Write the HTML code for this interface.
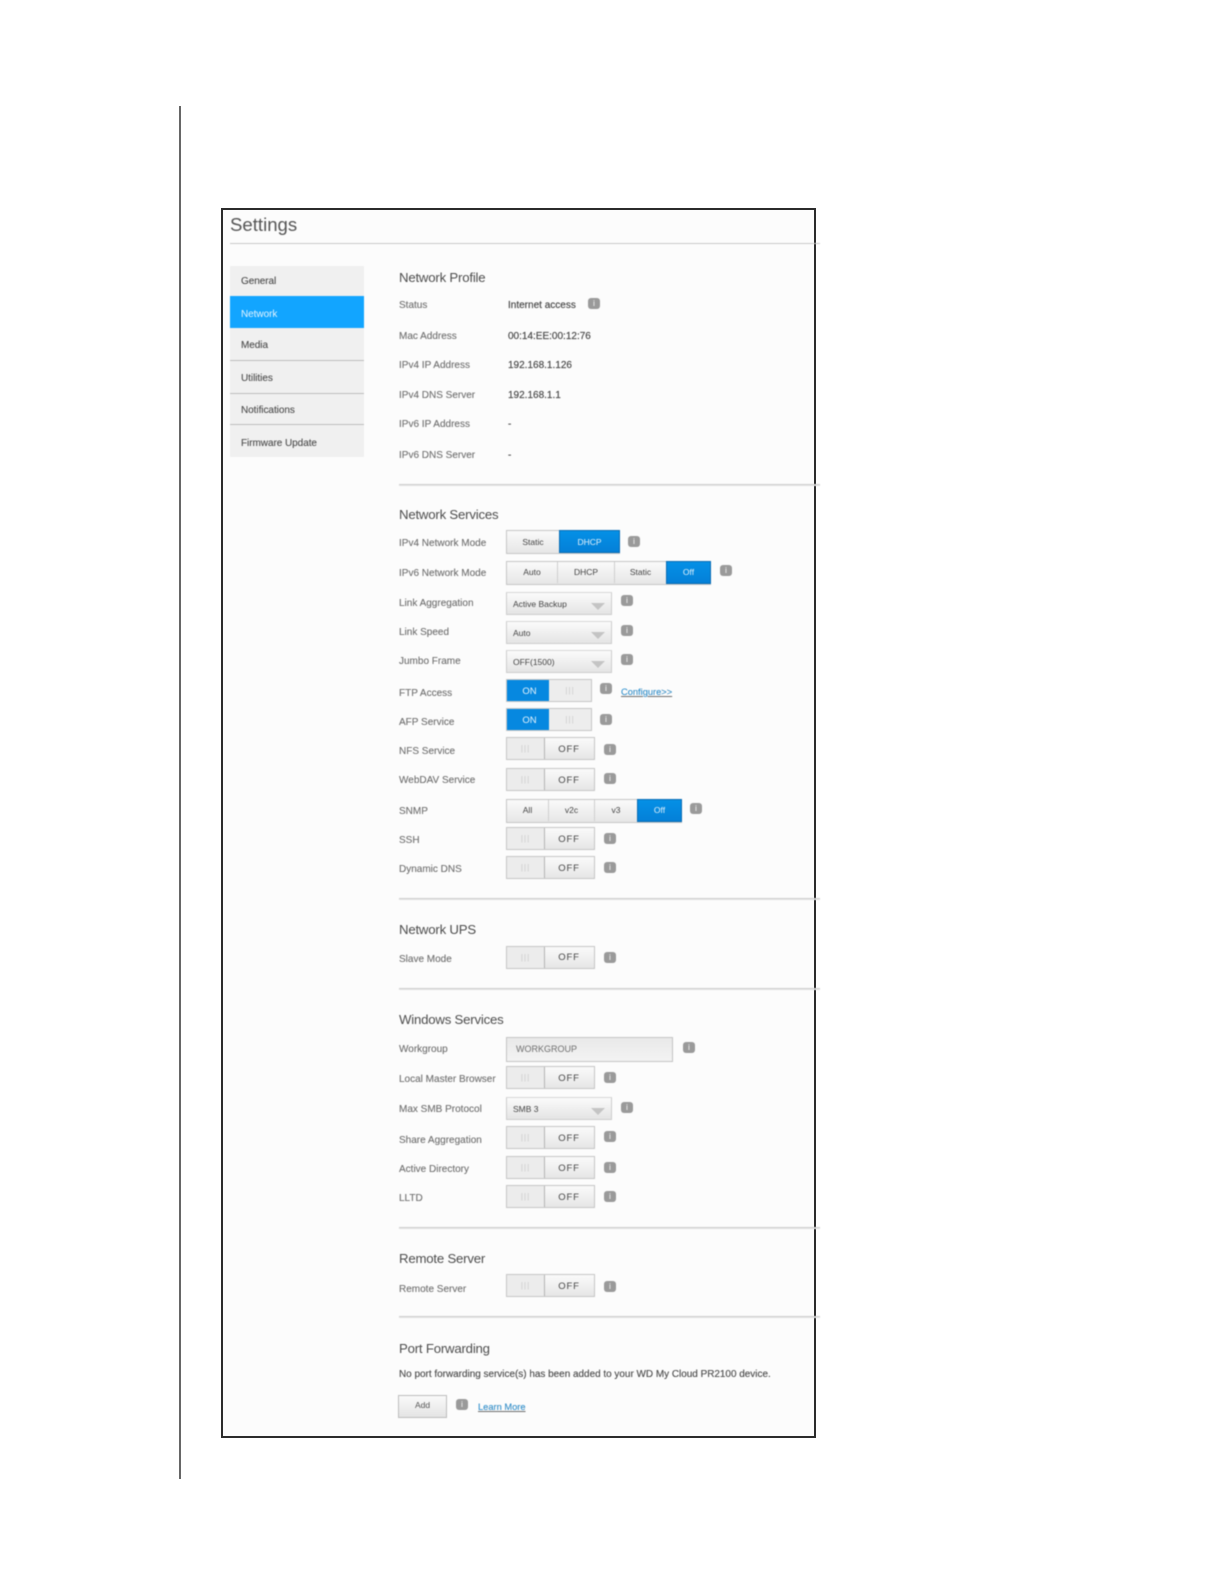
<!DOCTYPE html>
<html><head><meta charset="utf-8"><title>Settings</title>
<style>
html,body{margin:0;padding:0;background:#fff}
body{width:1224px;height:1584px;position:relative;overflow:hidden;font-family:"Liberation Sans",sans-serif}
.a{position:absolute}
#v{position:absolute;left:179px;top:106px;width:2px;height:1373px;background:#666}
#f{position:absolute;left:221px;top:208px;width:591px;height:1226px;border:2px solid #2b2b2b;background:#fcfcfc}
#c{position:absolute;left:0;top:0;width:1224px;height:1584px;filter:blur(.5px)}
.t{position:absolute;height:12px;line-height:12px;font-size:10px;white-space:nowrap;color:#6e6e6e;-webkit-text-stroke:.1px #6e6e6e}
.l{left:399px}
.val{left:508px;color:#444;-webkit-text-stroke:.15px #444}
.h{position:absolute;left:399px;height:18px;line-height:18px;font-size:13.2px;letter-spacing:-.2px;color:#4d4d4d;white-space:nowrap}
.hr{position:absolute;left:399px;width:421px;height:1px;background:#cfcfcf;border-bottom:1px solid #e2e2e2}
.nav{position:absolute;left:241px;height:12px;line-height:12px;font-size:10px;letter-spacing:-.05px;color:#4c4c4c;white-space:nowrap;-webkit-text-stroke:.1px #4c4c4c}
.sep{position:absolute;left:230px;width:134px;height:1px;background:#bdbdbd}
.i{position:absolute;width:12px;height:11px;margin:-5px 0 0 -6px;border-radius:3px;background:#9a9a9a;color:#ddd;font-size:8px;line-height:11px;text-align:center;font-weight:bold}
.g{position:absolute;height:23px;box-sizing:border-box;border:1px solid #c6c6c6;background:linear-gradient(#fafafa,#e6e6e6);display:flex;color:#444;font-size:8.5px;line-height:21px;text-align:center}
.g span{display:block;box-sizing:border-box;border-right:1px solid #cfcfcf;height:21px}
.g span:last-child{border-right:0}
.g span.on{background:linear-gradient(#0490e6,#0480d8);color:#e4f2fb;outline:1px solid #0a6db5}
.o{left:506px;width:89px}
.o span:first-child{width:38px;background:#ececec;color:#ccc;border-right:1px solid #b5b5b5;letter-spacing:1px}
.o span:last-child{width:49px;color:#444;font-size:9.5px;letter-spacing:.8px;line-height:23px;padding-right:1px}
.n{left:506px;width:86px;border-color:#c6c6c6}
.n span:first-child{width:42px;background:#0688e0;color:#e8f4fc;font-size:9.5px;border:0;line-height:23px;padding-left:3px}
.n span:last-child{width:42px;background:#ededed;color:#ccc;letter-spacing:1px}
.s{position:absolute;left:506px;width:106px;height:23px;box-sizing:border-box;border:1px solid #cdcdcd;border-top-color:#d8d8d8;background:linear-gradient(#fbfbfb,#e4e4e4);font-size:8.5px;color:#444;line-height:23px;padding-left:6px}
.s:after{content:"";position:absolute;right:6px;top:10px;border-left:7px solid transparent;border-right:7px solid transparent;border-top:7px solid #c4c4c4}
a{color:#1a93e0;text-decoration:underline;font-size:9.3px}
</style></head><body>
<div id="v"></div>
<div id="f"></div>
<div id="c">
<div class="a" style="left:230px;top:214px;height:22px;line-height:22px;font-size:18.6px;color:#555">Settings</div>
<div class="a" style="left:230px;top:243px;width:590px;height:1px;background:#c8c8c8"></div>

<div class="a" style="left:230px;top:266px;width:134px;height:191px;background:#f0f0f0"></div>
<div class="a" style="left:230px;top:296px;width:134px;height:32px;background:#12a5ff"></div>
<div class="sep" style="top:360px"></div><div class="sep" style="top:393px"></div><div class="sep" style="top:424px"></div>
<div class="nav" style="top:276px">General</div>
<div class="nav" style="top:309px;color:#e6f5ff;-webkit-text-stroke:0">Network</div>
<div class="nav" style="top:340px">Media</div>
<div class="nav" style="top:373px">Utilities</div>
<div class="nav" style="top:405px">Notifications</div>
<div class="nav" style="top:438px">Firmware Update</div>

<div class="h" style="top:269px">Network Profile</div>
<div class="t l" style="top:300px">Status</div><div class="t val" style="top:300px">Internet access</div><div class="i" style="left:594px;top:303px">i</div>
<div class="t l" style="top:331px">Mac Address</div><div class="t val" style="top:331px">00:14:EE:00:12:76</div>
<div class="t l" style="top:360px">IPv4 IP Address</div><div class="t val" style="top:360px">192.168.1.126</div>
<div class="t l" style="top:390px">IPv4 DNS Server</div><div class="t val" style="top:390px">192.168.1.1</div>
<div class="t l" style="top:419px">IPv6 IP Address</div><div class="t val" style="top:419px">-</div>
<div class="t l" style="top:450px">IPv6 DNS Server</div><div class="t val" style="top:450px">-</div>
<div class="hr" style="top:484px"></div>

<div class="h" style="top:506px">Network Services</div>
<div class="t l" style="top:538px">IPv4 Network Mode</div>
<div class="g" style="left:506px;top:530px;width:114px;height:24px"><span style="width:53px;line-height:22px">Static</span><span class="on" style="width:59px;line-height:22px">DHCP</span></div>
<div class="i" style="left:634px;top:541px">i</div>
<div class="t l" style="top:568px">IPv6 Network Mode</div>
<div class="g" style="left:506px;top:561px;width:205px;height:24px"><span style="width:51px">Auto</span><span style="width:57px">DHCP</span><span style="width:52px">Static</span><span class="on" style="width:43px">Off</span></div>
<div class="i" style="left:726px;top:570px">i</div>
<div class="t l" style="top:598px">Link Aggregation</div><div class="s" style="top:592px">Active Backup</div><div class="i" style="left:627px;top:600px">i</div>
<div class="t l" style="top:627px">Link Speed</div><div class="s" style="top:621px">Auto</div><div class="i" style="left:627px;top:630px">i</div>
<div class="t l" style="top:656px">Jumbo Frame</div><div class="s" style="top:650px">OFF(1500)</div><div class="i" style="left:627px;top:659px">i</div>
<div class="t l" style="top:688px">FTP Access</div><div class="g n" style="top:679px"><span>ON</span><span>|||</span></div><div class="i" style="left:606px;top:688px">i</div>
<div class="t" style="left:621px;top:686px"><a href="#">Configure&gt;&gt;</a></div>
<div class="t l" style="top:717px">AFP Service</div><div class="g n" style="top:708px"><span>ON</span><span>|||</span></div><div class="i" style="left:606px;top:719px">i</div>
<div class="t l" style="top:746px">NFS Service</div><div class="g o" style="top:737px"><span>|||</span><span>OFF</span></div><div class="i" style="left:610px;top:749px">i</div>
<div class="t l" style="top:775px">WebDAV Service</div><div class="g o" style="top:768px"><span>|||</span><span>OFF</span></div><div class="i" style="left:610px;top:778px">i</div>
<div class="t l" style="top:806px">SNMP</div>
<div class="g" style="left:506px;top:799px;width:176px;height:24px"><span style="width:42px">All</span><span style="width:46px">v2c</span><span style="width:43px">v3</span><span class="on" style="width:43px">Off</span></div>
<div class="i" style="left:696px;top:808px">i</div>
<div class="t l" style="top:835px">SSH</div><div class="g o" style="top:827px"><span>|||</span><span>OFF</span></div><div class="i" style="left:610px;top:838px">i</div>
<div class="t l" style="top:864px">Dynamic DNS</div><div class="g o" style="top:856px"><span>|||</span><span>OFF</span></div><div class="i" style="left:610px;top:867px">i</div>
<div class="hr" style="top:898px"></div>

<div class="h" style="top:921px">Network UPS</div>
<div class="t l" style="top:954px">Slave Mode</div><div class="g o" style="top:946px"><span>|||</span><span style="line-height:22px">OFF</span></div><div class="i" style="left:610px;top:957px">i</div>
<div class="hr" style="top:988px"></div>

<div class="h" style="top:1011px">Windows Services</div>
<div class="t l" style="top:1044px">Workgroup</div>
<div class="a" style="left:506px;top:1037px;width:167px;height:25px;box-sizing:border-box;border:1px solid #c4c4c4;background:linear-gradient(#e9e9e9,#f3f3f3);font-size:9px;line-height:22px;padding-left:9px;color:#6f6f6f">WORKGROUP</div>
<div class="i" style="left:689px;top:1047px">i</div>
<div class="t l" style="top:1074px">Local Master Browser</div><div class="g o" style="top:1066px"><span>|||</span><span>OFF</span></div><div class="i" style="left:610px;top:1077px">i</div>
<div class="t l" style="top:1104px">Max SMB Protocol</div><div class="s" style="top:1097px">SMB 3</div><div class="i" style="left:627px;top:1107px">i</div>
<div class="t l" style="top:1135px">Share Aggregation</div><div class="g o" style="top:1126px"><span>|||</span><span>OFF</span></div><div class="i" style="left:610px;top:1136px">i</div>
<div class="t l" style="top:1164px">Active Directory</div><div class="g o" style="top:1156px"><span>|||</span><span>OFF</span></div><div class="i" style="left:610px;top:1167px">i</div>
<div class="t l" style="top:1193px">LLTD</div><div class="g o" style="top:1185px"><span>|||</span><span>OFF</span></div><div class="i" style="left:610px;top:1196px">i</div>
<div class="hr" style="top:1227px"></div>

<div class="h" style="top:1250px">Remote Server</div>
<div class="t l" style="top:1284px">Remote Server</div><div class="g o" style="top:1274px"><span>|||</span><span>OFF</span></div><div class="i" style="left:610px;top:1286px">i</div>
<div class="hr" style="top:1316px"></div>

<div class="h" style="top:1340px">Port Forwarding</div>
<div class="t l" style="top:1369px;color:#484848;font-size:9.95px;-webkit-text-stroke:.12px #484848">No port forwarding service(s) has been added to your WD My Cloud PR2100 device.</div>
<div class="a" style="left:398px;top:1395px;width:49px;height:23px;box-sizing:border-box;border:1px solid #bdbdbd;background:linear-gradient(#fafafa,#e4e4e4);font-size:8.5px;line-height:19px;text-align:center;color:#555">Add</div>
<div class="i" style="left:462px;top:1404px">i</div>
<div class="t" style="left:478px;top:1401px"><a href="#">Learn More</a></div>
</div>
</body></html>
